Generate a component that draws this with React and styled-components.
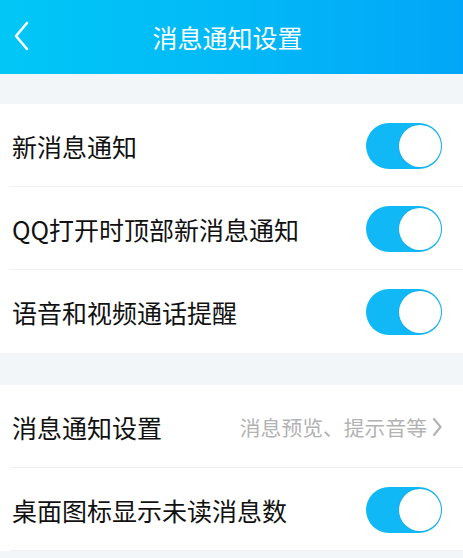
import React from 'react';
import styled, { createGlobalStyle } from 'styled-components';

const GlobalStyle = createGlobalStyle`
  html, body {
    margin: 0;
    padding: 0;
    background: #f3f6f9;
    font-family: "Noto Sans CJK SC", "Noto Sans", sans-serif;
  }
`;

const Page = styled.div`
  width: 463px;
  height: 558px;
  overflow: hidden;
  background: #f3f6f9;
`;

const Header = styled.div`
  height: 74px;
  display: flex;
  align-items: center;
  justify-content: center;
  position: relative;
  background: linear-gradient(90deg, #01c7f6 0%, #02b9f7 50%, #02a6f8 100%);
`;

const BackButton = styled.div`
  position: absolute;
  left: 12px;
  top: 21px;
  width: 20px;
  height: 30px;
  display: flex;
`;

const Title = styled.div`
  color: #ffffff;
  font-size: 25px;
  margin-right: 8px;
`;

const Group = styled.div`
  background: #ffffff;
  margin-top: ${({ $gap }) => $gap}px;
`;

const Row = styled.div`
  height: 83px;
  display: flex;
  align-items: center;
  justify-content: space-between;
  padding: 0 21px 0 12px;
  position: relative;
  &::after {
    content: '';
    position: absolute;
    left: 10px;
    right: 0;
    bottom: 0;
    height: 1px;
    background: ${({ $last }) => ($last ? 'transparent' : '#efefef')};
  }
`;

const Label = styled.div`
  font-size: 25px;
  color: #111111;
`;

const Hint = styled.div`
  display: flex;
  align-items: center;
  gap: 5px;
  font-size: 20.8px;
  color: #b3b3b3;
`;

const Switch = styled.div`
  width: 76px;
  height: 46px;
  border-radius: 23px;
  background: #10b9f5;
  display: flex;
  align-items: center;
  justify-content: flex-end;
  padding: 0 1px;
  box-sizing: border-box;
`;

const Knob = styled.div`
  width: 42px;
  height: 42px;
  border-radius: 50%;
  background: #ffffff;
  box-shadow: 0 0 0 1px rgba(40, 160, 220, 0.4);
`;

const Toggle = () => (
  <Switch>
    <Knob />
  </Switch>
);

const groups = [
  {
    gap: 30,
    rows: [
      { label: '新消息通知', on: true },
      { label: 'QQ打开时顶部新消息通知', on: true },
      { label: '语音和视频通话提醒', on: true, last: true },
    ],
  },
  {
    gap: 32,
    rows: [
      { label: '消息通知设置', hint: '消息预览、提示音等' },
      { label: '桌面图标显示未读消息数', on: true },
    ],
  },
];

export default function App() {
  return (
    <Page>
      <GlobalStyle />
      <Header>
        <BackButton>
          <svg width="20" height="30" viewBox="0 0 20 30">
            <path d="M15 2 L4 15 L15 28" fill="none" stroke="#ffffff" strokeWidth="2.6" strokeLinecap="round" strokeLinejoin="round" />
          </svg>
        </BackButton>
        <Title>消息通知设置</Title>
      </Header>
      {groups.map((g, gi) => (
        <Group key={gi} $gap={g.gap}>
          {g.rows.map((r) => (
            <Row key={r.label} $last={r.last}>
              <Label>{r.label}</Label>
              {r.hint ? (
                <Hint>
                  {r.hint}
                  <svg width="10" height="20" viewBox="0 0 10 20">
                    <path d="M2 2 L8.5 10 L2 18" fill="none" stroke="#b3b3b3" strokeWidth="2.2" strokeLinecap="round" strokeLinejoin="round" />
                  </svg>
                </Hint>
              ) : (
                <Toggle />
              )}
            </Row>
          ))}
        </Group>
      ))}
    </Page>
  );
}
